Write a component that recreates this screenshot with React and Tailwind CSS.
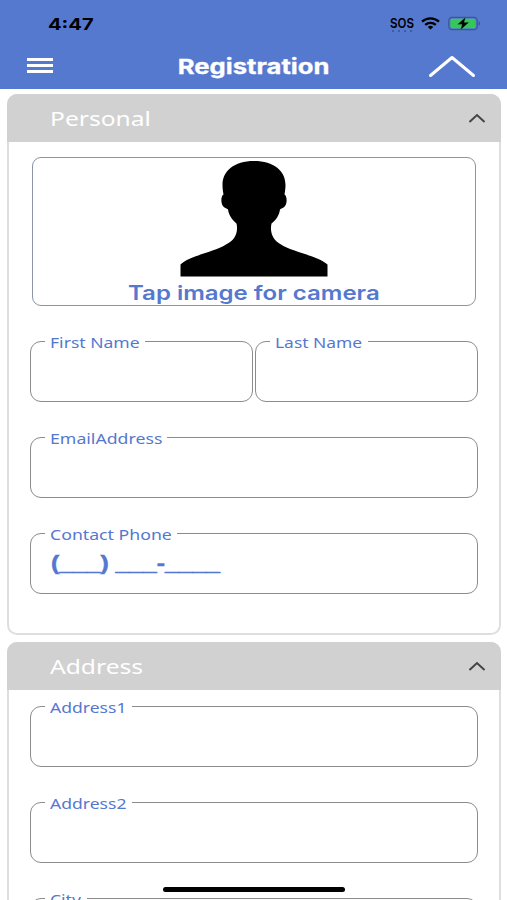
import React, { useState } from 'react';
import clsx from 'clsx';

const personalRows = [
  [
    { name: 'firstName', label: 'First Name', scale: 'scale-x-[1.21]', gap: 'w-[100px]' },
    { name: 'lastName', label: 'Last Name', scale: 'scale-x-[1.2]', gap: 'w-[98px]' },
  ],
  [{ name: 'email', label: 'EmailAddress', scale: 'scale-x-[1.22]', gap: 'w-[122px]' }],
  [{ name: 'phone', label: 'Contact Phone', scale: 'scale-x-[1.22]', gap: 'w-[132px]', mask: '(___) ___-____' }],
];

const addressRows = [
  [{ name: 'address1', label: 'Address1', scale: 'scale-x-[1.21]', gap: 'w-[87px]' }],
  [{ name: 'address2', label: 'Address2', scale: 'scale-x-[1.21]', gap: 'w-[87px]' }],
  [{ name: 'city', label: 'City', scale: 'scale-x-[1.21]', gap: 'w-[42px]' }],
];

function StatusBar() {
  return (
    <div className="flex h-[46px] items-center pl-12 pr-[26px] text-black">
      <span className="mt-[2px] origin-left scale-x-[1.22] text-[16.5px] font-bold leading-none">4:47</span>
      <div className="ml-auto flex items-center">
        <div className="mr-[7px] flex w-[25px] flex-col items-center">
          <span className="scale-x-[0.86] text-[13.5px] font-semibold leading-[13px]">SOS</span>
          <span className="-mb-[2px] flex gap-[4px]">
            {[0, 1, 2, 3].map((dot) => (
              <i key={dot} className="h-[2px] w-[2px] rounded-full bg-[#3a5290]" />
            ))}
          </span>
        </div>
        <svg className="mr-[8px] h-[13px] w-[19px]" viewBox="0 0 19 13" fill="none" stroke="#000" strokeWidth="2.4">
          <path d="M1 4.6C6 .3 13 .3 18 4.6" />
          <path d="M4.2 7.8c3-2.6 7.6-2.6 10.6 0" />
          <path d="M6.8 9.9c1.5-1.4 3.9-1.4 5.4 0L9.5 12.6z" fill="#000" stroke="none" />
        </svg>
        <svg className="h-[15px] w-[33px]" viewBox="0 0 33 15">
          <rect x=".8" y="1.3" width="28.4" height="12.4" rx="3.2" fill="none" stroke="#3c5696" strokeWidth="1.2" />
          <rect x="2.4" y="2.8" width="25.2" height="9.4" rx="2" fill="#35c759" />
          <path d="M30.6 5.2c1.9.6 1.9 4 0 4.6z" fill="#3c5696" />
          <path d="M18 .8 9.200 8.500h4.800L12.200 14.300l9-8h-5z" fill="#000" stroke="#35c759" strokeWidth=".4" />
        </svg>
      </div>
    </div>
  );
}

function TopBar() {
  return (
    <div className="flex h-[39px] items-center justify-between pl-[27px] pr-[30px]">
      <button className="flex w-[26px] flex-col gap-[3px]" aria-label="Menu">
        <span className="h-[3px] bg-white" />
        <span className="h-[3px] bg-white" />
        <span className="h-[3px] bg-white" />
      </button>
      <h1 className="ml-[27px] mt-[3px] scale-x-[1.25] text-[20.5px] font-bold leading-none text-white [-webkit-text-stroke:0.3px_#fff]">
        Registration
      </h1>
      <button aria-label="Collapse all">
        <svg className="h-[24px] w-[50px]" viewBox="0 0 50 24" fill="none" stroke="#fff" strokeWidth="3" strokeLinecap="round">
          <path d="M3.5 21.500 25 3.500l21.500 18" strokeLinejoin="round" />
        </svg>
      </button>
    </div>
  );
}

function Section({ title, className, children }) {
  const [open, setOpen] = useState(true);

  return (
    <section className={clsx('rounded-[10px] border-2 border-[#dedede] bg-white', className)}>
      <button
        onClick={() => setOpen(!open)}
        className="-mx-[2px] -mt-[2px] flex h-12 w-[calc(100%+4px)] items-center justify-between rounded-t-[10px] bg-[#d1d1d1] pl-[43px] pr-[15px]"
      >
        <span className="mt-[2px] origin-left scale-x-[1.23] font-['Noto_Sans',sans-serif] text-[20px] leading-none text-white">
          {title}
        </span>
        <svg
          className={clsx('h-[10px] w-[18px]', !open && 'rotate-180')}
          viewBox="0 0 18 10"
          fill="none"
          stroke="#444"
          strokeWidth="2"
          strokeLinecap="round"
        >
          <path d="M2 8.4 9 2l7 6.4" />
        </svg>
      </button>
      {open && children}
    </section>
  );
}

function Field({ name, label, scale, gap, mask }) {
  return (
    <div className="h-[61px] flex-1 rounded-[11px] border border-[#8c8c8c]">
      {/* label sits on the outline and hides the part behind it */}
      <label htmlFor={name} className={clsx('-mt-[12px] ml-[14px] block h-[22px] bg-white pl-[5px]', gap)}>
        <span
          className={clsx(
            "inline-block origin-left whitespace-nowrap font-['Noto_Sans',sans-serif] text-[14.5px] leading-[20px] text-[#5578cf]",
            scale
          )}
        >
          {label}
        </span>
      </label>
      <input
        id={name}
        defaultValue={mask}
        className="ml-[20px] mt-px block h-[36px] w-[80%] origin-left scale-x-[1.235] bg-transparent font-['Liberation_Sans',sans-serif] text-[20px] font-bold text-[#5578cf] outline-none [-webkit-text-stroke:0.5px_#5578cf]"
      />
    </div>
  );
}

function FieldRows({ rows }) {
  return (
    <div className="flex flex-col gap-[35px]">
      {rows.map((row) => (
        <div key={row[0].name} className="flex gap-[2px]">
          {row.map((field) => (
            <Field key={field.name} {...field} />
          ))}
        </div>
      ))}
    </div>
  );
}

function PhotoPicker() {
  return (
    <button className="ml-[2px] flex h-[149px] w-[444px] flex-col items-center rounded-[9px] border border-[#8d93a3] pt-[2px]">
      <svg className="h-[117px] w-[148px] shrink-0" viewBox="0 0 148 117">
        <path
          d="M74 1c-20 0-31.500 10-31.500 24 0 3 .4 6 1 9.500-3 1.500-3 11 1 13 1 1 3 1 3.500 2 1 6 4 10 8.500 14 2 9-1.500 17-10.500 21C34 92 9 96 .5 104.500v12h147v-12C138 96 113 92 101 84.500c-8-4-11.500-12-9.500-21 5-4 7.500-8 8.500-14 .5-1 2.500-1 3.500-2 4-2 4-11.500 1-13 .6-3.500 1-6.500 1-9.500C105.500 11 94 1 74 1z"
          fill="#000"
        />
      </svg>
      <span className="mt-[3px] scale-x-[1.2] whitespace-nowrap text-[20px] font-semibold leading-[26px] text-[#5578cf]">
        Tap image for camera
      </span>
    </button>
  );
}

function App() {
  return (
    <div className="relative h-[900px] w-[507px] overflow-hidden bg-white font-[Inter,sans-serif]">
      <header className="h-[89px] bg-[#5679d0]">
        <StatusBar />
        <TopBar />
      </header>

      <main className="flex flex-col gap-[7px] pl-[7px] pr-[6px] pt-[5px]">
        <Section title="Personal" className="h-[541px]">
          <div className="px-[21px] pt-[15px]">
            <PhotoPicker />
            <div className="h-[35px]" />
            <FieldRows rows={personalRows} />
          </div>
        </Section>

        <Section title="Address" className="h-[420px]">
          <div className="px-[21px] pt-[16px]">
            <FieldRows rows={addressRows} />
          </div>
        </Section>
      </main>

      {/* home indicator */}
      <div className="absolute bottom-[8px] left-[163px] h-[5px] w-[182px] rounded-full bg-black" />
    </div>
  );
}

export default App;
